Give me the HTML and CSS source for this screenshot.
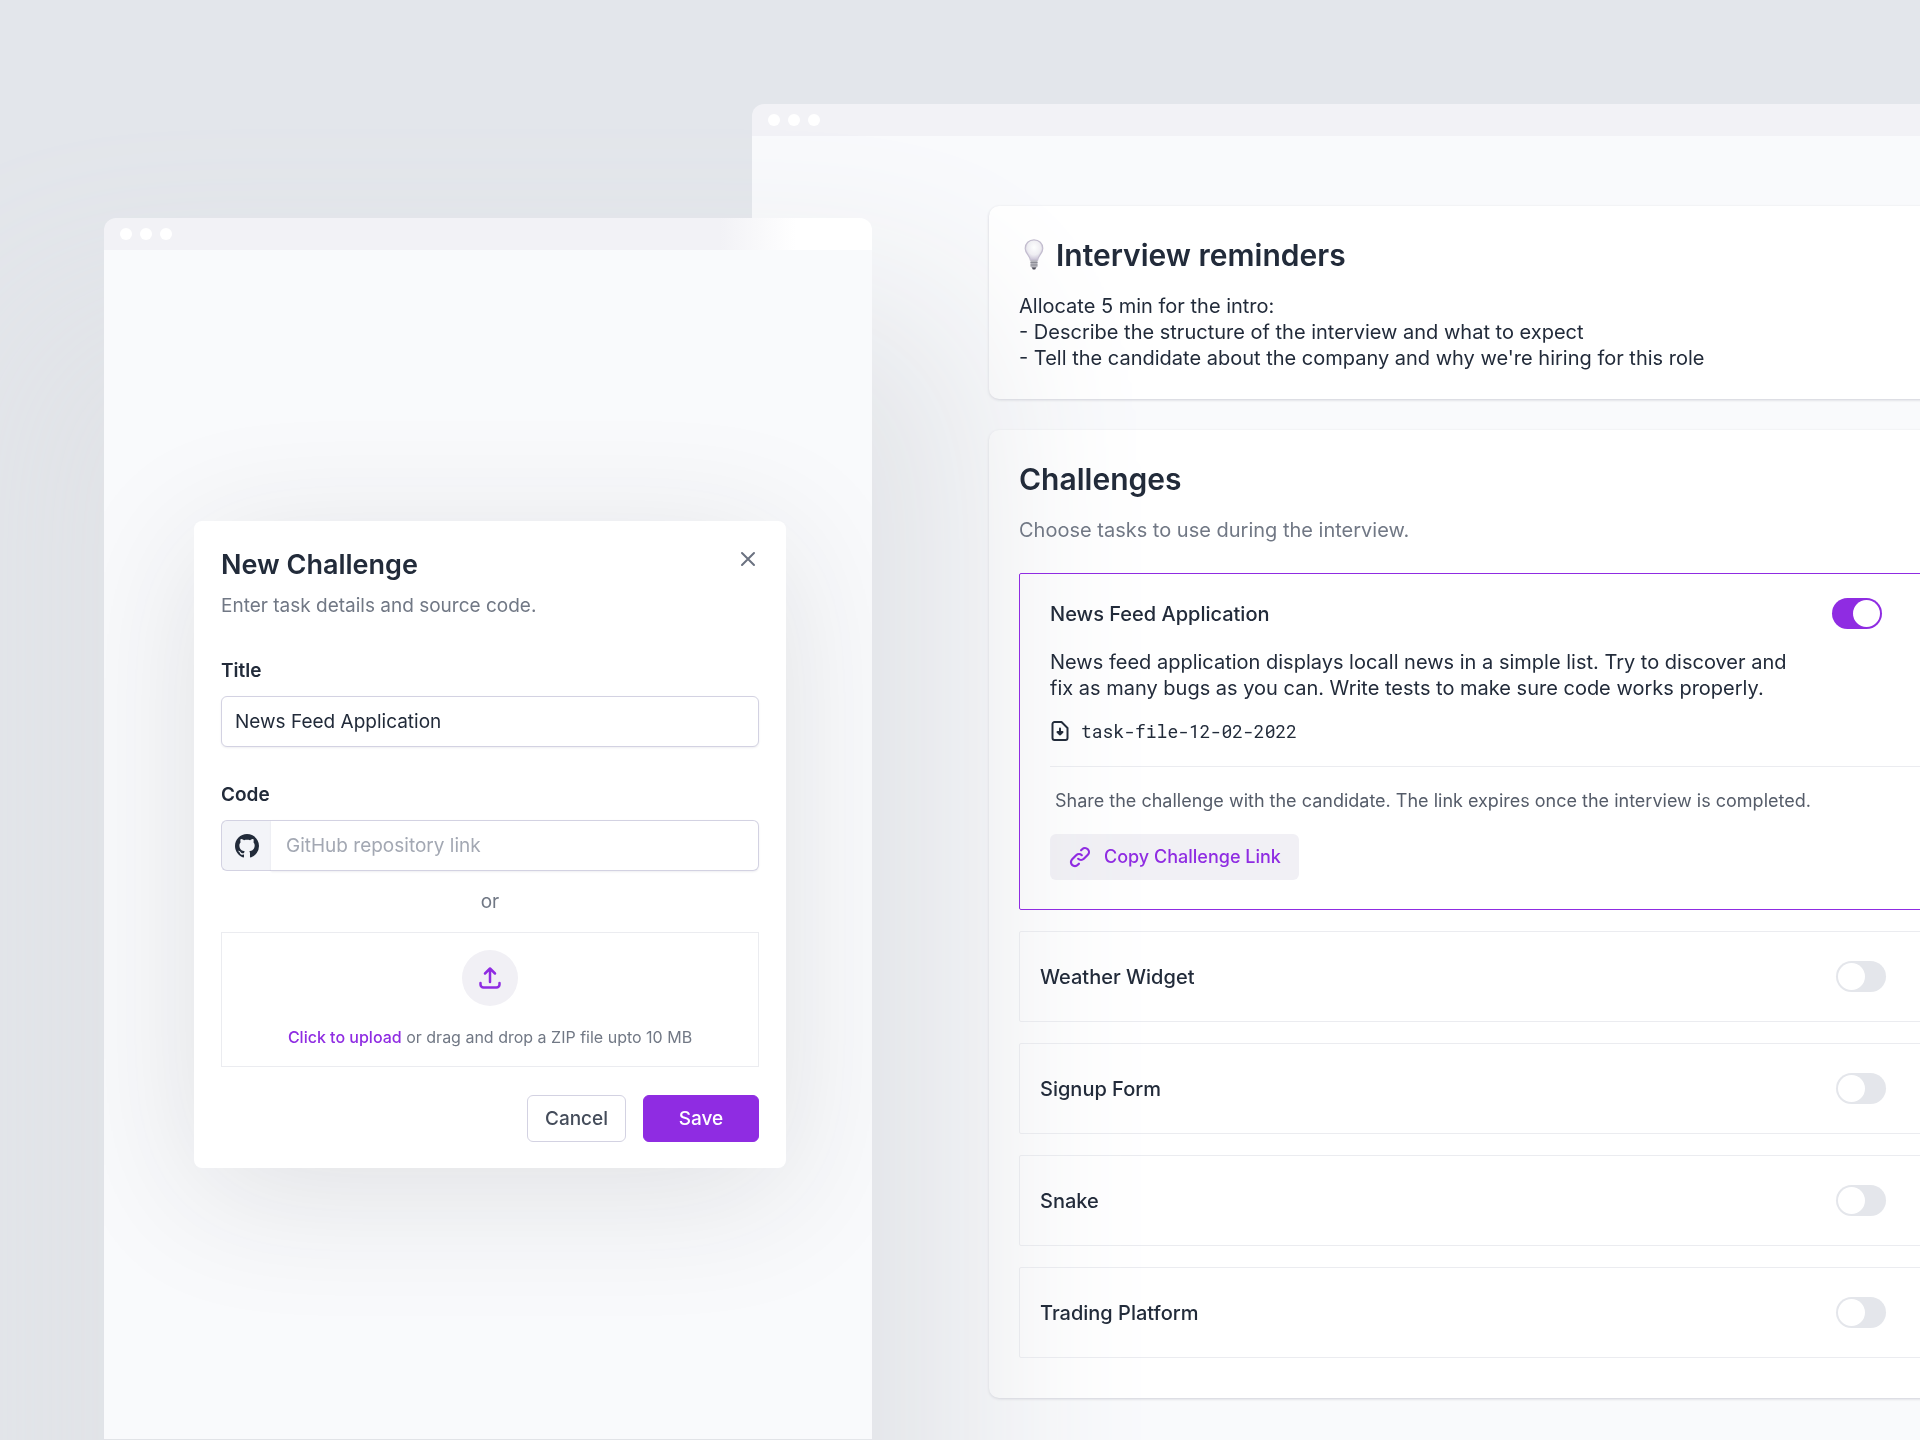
FILE: index.html
```html
<!DOCTYPE html>
<html lang="en">
<head>
  <meta charset="UTF-8" />
  <meta name="viewport" content="width=device-width, initial-scale=1.0" />
  <title>Interview challenges</title>
  <link rel="stylesheet" href="styles.css">
</head>
<body>
  <div class="desktop">
    <main class="window window-back">
      <div class="title-bar"><span></span><span></span><span></span></div>
      <div class="window-body page">
        <section class="card">
          <h1>
            <svg class="bulb" width="26" height="32" viewBox="0 0 26 32" aria-hidden="true">
              <defs>
                <radialGradient id="glass" cx="50%" cy="38%" r="60%">
                  <stop offset="0" stop-color="#ffffff" />
                  <stop offset="0.6" stop-color="#f0eff3" />
                  <stop offset="1" stop-color="#c9c3d6" />
                </radialGradient>
              </defs>
              <path d="M13 .8c-5 0-8.800 3.800-8.800 8.600 0 5 4.700 7 5.200 11.800h7.200c.5-4.800 5.200-6.800 5.200-11.800 0-4.800-3.800-8.600-8.800-8.600z" fill="url(#glass)" stroke="#c3bdcf" stroke-width="1.200" />
              <path d="M9.500 21.200h7v6.300l-1.500 1.500h-4l-1.500-1.500z" fill="#b4b4bb" />
              <path d="M9.500 23.500h7M9.500 26h7" stroke="#8b8b94" stroke-width="1" />
              <path d="M10.800 28.500h4.400l-1 2h-2.400z" fill="#4d4d58" />
            </svg>
            Interview reminders
          </h1>
          <p>Allocate 5 min for the intro:<br>- Describe the structure of the interview and what to expect<br>- Tell the candidate about the company and why we're hiring for this role</p>
        </section>

        <section class="card challenges">
          <h1>Challenges</h1>
          <p class="muted">Choose tasks to use during the interview.</p>

          <div class="task-list">
            <article class="task task-open">
              <div class="task-head">
                <label for="task-news">News Feed Application</label>
                <input type="checkbox" class="toggle" id="task-news" checked>
              </div>
              <p class="task-desc">News feed application displays locall news in a simple list. Try to discover and fix as many bugs as you can. Write tests to make sure code works properly.</p>
              <a href="#" class="task-file">
                <svg width="20" height="22" viewBox="0 0 20 22" fill="none" stroke="currentColor" stroke-width="2" stroke-linecap="round" stroke-linejoin="round" aria-hidden="true">
                  <path d="M4.500 2h7l6 6v10a2 2 0 0 1-2 2h-11a2 2 0 0 1-2-2V4a2 2 0 0 1 2-2z" />
                  <path d="M10 8.500v6M7.500 12l2.500 2.500 2.500-2.500z" />
                </svg>
                task-file-12-02-2022
              </a>
              <hr>
              <p class="share">Share the challenge with the candidate. The link expires once the interview is completed.</p>
              <button type="button" class="btn-copy">
                <svg width="24" height="24" viewBox="0 0 24 24" fill="none" stroke="currentColor" stroke-width="2.200" stroke-linecap="round" stroke-linejoin="round" aria-hidden="true">
                  <path d="M13.828 10.172a4 4 0 0 0-5.656 0l-4 4a4 4 0 1 0 5.656 5.656l1.102-1.101" />
                  <path d="M10.172 13.828a4 4 0 0 0 5.656 0l4-4a4 4 0 0 0-5.656-5.656l-1.100 1.100" />
                </svg>
                Copy Challenge Link
              </button>
            </article>

            <article class="task">
              <label for="task-weather">Weather Widget</label>
              <input type="checkbox" class="toggle" id="task-weather">
            </article>
            <article class="task">
              <label for="task-signup">Signup Form</label>
              <input type="checkbox" class="toggle" id="task-signup">
            </article>
            <article class="task">
              <label for="task-snake">Snake</label>
              <input type="checkbox" class="toggle" id="task-snake">
            </article>
            <article class="task">
              <label for="task-trading">Trading Platform</label>
              <input type="checkbox" class="toggle" id="task-trading">
            </article>
          </div>
        </section>
      </div>
    </main>

    <div class="window window-front">
      <div class="title-bar"><span></span><span></span><span></span></div>
      <div class="window-body modal-area">
        <form class="modal">
          <button type="button" class="close" aria-label="Close">
            <svg width="16" height="16" viewBox="0 0 16 16" fill="none" stroke="currentColor" stroke-width="2" stroke-linecap="round" aria-hidden="true">
              <path d="M2 2l12 12M14 2L2 14" />
            </svg>
          </button>
          <h2>New Challenge</h2>
          <p class="subtitle">Enter task details and source code.</p>

          <div class="field">
            <label for="title">Title</label>
            <input type="text" id="title" value="News Feed Application">
          </div>

          <div class="field">
            <label for="repo">Code</label>
            <div class="input-group">
              <span class="addon">
                <svg width="24" height="24" viewBox="0 0 16 16" fill="currentColor" aria-hidden="true">
                  <path d="M8 0C3.580 0 0 3.580 0 8c0 3.540 2.290 6.530 5.470 7.590.4.070.55-.17.55-.38 0-.19-.01-.82-.01-1.490-2.010.37-2.530-.49-2.690-.94-.09-.23-.48-.94-.82-1.130-.28-.15-.68-.52-.01-.53.63-.01 1.080.58 1.230.82.72 1.210 1.870.87 2.330.66.07-.52.28-.87.51-1.070-1.780-.2-3.640-.89-3.640-3.950 0-.87.31-1.590.82-2.150-.08-.2-.36-1.020.08-2.120 0 0 .67-.21 2.200.82.64-.18 1.320-.27 2-.27s1.360.09 2 .27c1.530-1.040 2.200-.82 2.200-.82.44 1.100.16 1.920.08 2.120.51.56.82 1.270.82 2.150 0 3.070-1.870 3.750-3.650 3.950.29.25.54.73.54 1.480 0 1.070-.01 1.930-.01 2.200 0 .21.15.46.55.38A8.010 8.010 0 0 0 16 8c0-4.420-3.580-8-8-8z" />
                </svg>
              </span>
              <input type="text" id="repo" placeholder="GitHub repository link">
            </div>
          </div>

          <p class="or">or</p>

          <div class="dropzone">
            <span class="upload-icon">
              <svg width="24" height="24" viewBox="0 0 24 24" fill="none" stroke="currentColor" stroke-width="2.500" stroke-linecap="round" stroke-linejoin="round" aria-hidden="true">
                <path d="M2.500 17v1.500a3 3 0 0 0 3 3h13a3 3 0 0 0 3-3V17" />
                <path d="M12 16V3M7 7.500l5-5 5 5" />
              </svg>
            </span>
            <p><label for="zip">Click to upload</label> or drag and drop a ZIP file upto 10 MB</p>
            <input type="file" id="zip" accept=".zip" class="visually-hidden">
          </div>

          <div class="actions">
            <button type="button" class="btn-cancel">Cancel</button>
            <button type="submit" class="btn-save">Save</button>
          </div>
        </form>
      </div>
    </div>
  </div>
</body>
</html>
```
FILE: styles.css
```css
:root {
  --purple: #8f2ce2;
  --text: #222b3a;
  --muted: #717885;
  --border: #ebecf0;
  --field-border: #d3d2e2;
  --tint: #f1f0f5;
  --bar: #f2f2f6;
  --page: #f9fafc;
}
* {
  margin: 0;
  padding: 0;
  box-sizing: border-box;
}
body {
  background-color: #e3e6eb;
  color: var(--text);
  font-family: Inter, 'Liberation Sans', sans-serif;
  font-size: 20px;
  line-height: 26px;
}
button,
input {
  font: inherit;
  color: inherit;
}
button {
  cursor: pointer;
}
svg {
  display: block;
  flex: none;
}
.desktop {
  position: relative;
  min-height: 100vh;
  overflow: hidden;
}

/* windows */
.window {
  display: flex;
  flex-direction: column;
  border-radius: 12px 12px 0 0;
}
.window-back {
  margin: 104px -60px 0 752px;
  min-height: calc(100vh - 104px);
}
.window-front {
  position: absolute;
  top: 218px;
  bottom: 1px;
  left: 104px;
  width: 768px;
}
/* shadow only darkens, so text under it stays readable */
.window-front::before {
  content: "";
  position: absolute;
  inset: 0;
  border-radius: 12px 12px 0 0;
  box-shadow: 0 180px 200px 92px #e1e3e7;
  mix-blend-mode: darken;
  pointer-events: none;
}
.title-bar {
  display: flex;
  align-items: center;
  gap: 8px;
  height: 32px;
  padding: 0 16px;
  border-radius: 12px 12px 0 0;
  background: var(--bar);
}
.title-bar span {
  width: 12px;
  height: 12px;
  border-radius: 50%;
  background: #fff;
}
/* lighter where the bar lies over the window behind */
.window-front .title-bar {
  background: linear-gradient(90deg, var(--bar) 616px, #fff 692px);
}
.window-body {
  flex: 1;
  background: var(--page);
}

/* interview page */
.page {
  display: flex;
  flex-direction: column;
  gap: 31px;
  padding: 70px 0 42px 237px;
}
.card {
  padding: 28px 30px;
  border-radius: 10px;
  background: #fff;
  box-shadow: 0 1px 3px rgba(40, 40, 70, 0.2);
}
.card h1 {
  display: flex;
  align-items: center;
  gap: 9px;
  margin-bottom: 17px;
  font-size: 30px;
  font-weight: 600;
  line-height: 42px;
}
.bulb {
  margin-left: 2px;
}
.muted {
  color: var(--muted);
}
.challenges {
  padding-bottom: 40px;
}
.task-list {
  display: flex;
  flex-direction: column;
  gap: 21px;
  margin-top: 30px;
}
.task {
  display: flex;
  align-items: center;
  justify-content: space-between;
  height: 91px;
  padding: 0 63px 0 20px;
  border: 1px solid var(--border);
  border-radius: 2px;
}
.task label {
  font-weight: 500;
}
.task-open {
  display: block;
  height: auto;
  padding: 24px 0 29px 30px;
  border-color: var(--purple);
}
.task-head {
  display: flex;
  align-items: center;
  justify-content: space-between;
  margin-bottom: 20px;
  padding-right: 67px;
}
.task-desc {
  max-width: 764px;
  margin-bottom: 18px;
}
.task-file {
  display: flex;
  align-items: center;
  gap: 11px;
  color: var(--text);
  font-family: 'Roboto Mono', 'DejaVu Sans Mono', monospace;
  font-size: 18px;
  line-height: 24px;
  text-decoration: none;
}
.task-open hr {
  margin: 23px 0 22px;
  border: none;
  border-top: 1px solid var(--border);
}
.share {
  margin: 0 0 21px 5px;
  color: #555c69;
  font-size: 18px;
  line-height: 24px;
}
.btn-copy {
  display: flex;
  align-items: center;
  gap: 12px;
  height: 46px;
  padding: 0 18px;
  border: none;
  border-radius: 6px;
  background: var(--tint);
  color: var(--purple);
  font-size: 18px;
  font-weight: 500;
}
.toggle {
  appearance: none;
  display: flex;
  width: 50px;
  height: 31px;
  padding: 2px;
  border-radius: 16px;
  background: #e4e6eb;
  cursor: pointer;
}
.toggle::before {
  content: "";
  width: 27px;
  height: 27px;
  border-radius: 50%;
  background: #fff;
}
.toggle:checked {
  justify-content: flex-end;
  background: var(--purple);
}

/* new challenge dialog */
.modal-area {
  display: flex;
  align-items: center;
  justify-content: center;
  padding-left: 4px;
  overflow: hidden;
}
.modal {
  position: relative;
  width: 592px;
  padding: 27px 27px 26px;
  border-radius: 8px;
  background: #fff;
  box-shadow: 0 24px 140px rgba(40, 40, 50, 0.12);
  font-size: 19px;
  line-height: 24px;
}
.close {
  position: absolute;
  top: 30px;
  right: 30px;
  padding: 0;
  border: none;
  background: none;
  color: #6b7280;
}
.modal h2 {
  font-size: 27px;
  font-weight: 600;
  line-height: 34px;
}
.subtitle {
  margin-top: 12px;
  margin-bottom: 41px;
  color: var(--muted);
}
.field {
  margin-bottom: 36px;
}
.field label {
  display: block;
  margin-bottom: 13px;
  font-weight: 600;
}
.field input {
  width: 100%;
  height: 51px;
  padding: 0 13px;
  border: 1px solid var(--field-border);
  border-radius: 6px;
  background: #fff;
  outline: none;
  box-shadow: 0 1px 2px rgba(40, 40, 80, 0.08);
}
.field input::placeholder {
  color: #a3a8b3;
}
.input-group {
  display: flex;
}
.addon {
  display: flex;
  align-items: center;
  justify-content: center;
  width: 50px;
  border: 1px solid var(--field-border);
  border-right: none;
  border-radius: 6px 0 0 6px;
  background: #f3f4f8;
}
.input-group input {
  flex: 1;
  padding: 0 15px;
  border-left: none;
  border-radius: 0 6px 6px 0;
}
.or {
  margin: -17px 0 18px;
  color: var(--muted);
  text-align: center;
}
.dropzone {
  display: flex;
  flex-direction: column;
  align-items: center;
  gap: 19px;
  padding: 17px;
  border: 1px solid var(--border);
  color: var(--muted);
  font-size: 16px;
}
.dropzone label {
  color: var(--purple);
  font-weight: 500;
  cursor: pointer;
}
.upload-icon {
  display: flex;
  align-items: center;
  justify-content: center;
  width: 56px;
  height: 56px;
  border-radius: 50%;
  background: var(--tint);
  color: var(--purple);
}
.visually-hidden {
  position: absolute;
  width: 1px;
  height: 1px;
  overflow: hidden;
  opacity: 0;
}
.actions {
  display: flex;
  justify-content: flex-end;
  gap: 17px;
  margin-top: 28px;
}
.actions button {
  height: 47px;
  border: 1px solid var(--field-border);
  border-radius: 6px;
  background: #fff;
  font-weight: 500;
}
.actions .btn-cancel {
  width: 99px;
  color: #444c5a;
}
.actions .btn-save {
  width: 116px;
  border-color: var(--purple);
  background: var(--purple);
  color: #fff;
}
```
